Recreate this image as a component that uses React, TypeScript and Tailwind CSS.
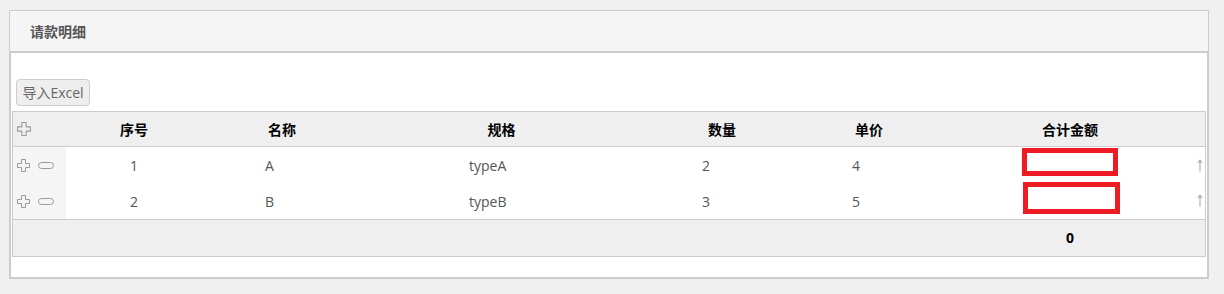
import React from "react";

type Row = { no: number; name: string; spec: string; qty: number; price: number };

const rows: Row[] = [
  { no: 1, name: "A", spec: "typeA", qty: 2, price: 4 },
  { no: 2, name: "B", spec: "typeB", qty: 3, price: 5 },
];

const cols = "grid grid-cols-[53px_136px_160px_279px_162px_132px_1fr]";

const PlusIcon = ({ size = 13 }: { size?: number }) => (
  <svg width={size} height={size} viewBox="0 0 13 13" fill="none">
    <path
      d="M4.5 0.5h4v4h4v4h-4v4h-4v-4h-4v-4h4z"
      stroke="#9a9a9a"
      strokeWidth="1"
      strokeLinejoin="round"
    />
  </svg>
);

const MinusIcon = () => (
  <svg width="16" height="7" viewBox="0 0 16 7" fill="none">
    <rect x="0.5" y="0.5" width="15" height="6" rx="3" stroke="#9a9a9a" strokeWidth="1" />
  </svg>
);

// 排序箭头
const UpArrow = () => (
  <svg width="6" height="13" viewBox="0 0 6 13" fill="none">
    <path d="M3 1.5V12.5M0.8 4L3 1.2L5.2 4" stroke="#a4adb8" strokeWidth="1.1" />
  </svg>
);

const App = () => {
  return (
    <div className="min-h-[294px] w-[1224px] bg-[#f0f0f0] pt-[10px] pl-[9px] font-['Open_Sans','Noto_Sans_CJK_SC',sans-serif]">
      <div className="w-[1200px] border border-[#cccccc] bg-white">
        {/* 面板标题 */}
        <div className="flex h-[41px] items-center border-b border-[#cccccc] bg-[#f5f5f5] pl-[20px]">
          <span className="text-[14px] font-bold text-[#555555] font-['Noto_Sans_CJK_SC',sans-serif]">请款明细</span>
        </div>

        <div className="border border-[#cccccc] bg-white pb-[20px]">
          <div className="pt-[26px] pl-[5px]">
            <button className="flex h-[27px] w-[74px] items-center justify-center rounded-[4px] border border-[#cccccc] bg-[#eeeeee] text-[14px] text-[#666666]">
              导入Excel
            </button>
          </div>

          <div className="mx-[1px] mt-[5px] border border-[#cccccc] text-[14px]">
            {/* 表头 */}
            <div className={`${cols} h-[35px] items-center border-b border-[#cccccc] bg-[#efefef] font-bold text-black font-['Noto_Sans_CJK_SC',sans-serif]`}>
              <div className="flex items-center pl-[4px]">
                <PlusIcon size={14} />
              </div>
              <div className="text-center">序号</div>
              <div className="text-center">名称</div>
              <div className="text-center">规格</div>
              <div className="text-center">数量</div>
              <div className="text-center">单价</div>
              <div className="text-center">合计金额</div>
            </div>

            {/* 明细行 */}
            <div className="border-b border-[#cccccc]">
              {rows.map((r, i) => (
                <div key={r.no} className={`${cols} h-[36px] items-center text-[#555555]`}>
                  <div className="flex h-full items-center gap-[8px] bg-[#f5f5f5] pl-[4px]">
                    <PlusIcon />
                    <MinusIcon />
                  </div>
                  <div className="text-center">{r.no}</div>
                  <div className="pl-[63px]">{r.name}</div>
                  <div className="pl-[107px]">{r.spec}</div>
                  <div className="pl-[61px]">{r.qty}</div>
                  <div className="pl-[49px]">{r.price}</div>
                  <div className="flex h-full items-start">
                    {i === 0 ? (
                      <div className="mt-[1px] ml-[87px] h-[28px] w-[96px] border-[5px] border-[#ed1c24] bg-white" />
                    ) : (
                      <div className="-mt-[1px] ml-[88px] h-[32px] w-[97px] border-[5px] border-[#ed1c24] bg-white" />
                    )}
                    <span className={`${i === 0 ? "mt-[12px]" : "mt-[11px]"} mr-[2px] ml-auto flex`}>
                      <UpArrow />
                    </span>
                  </div>
                </div>
              ))}
            </div>

            {/* 合计 */}
            <div className={`${cols} h-[36px] items-center bg-[#efefef] pb-[2px] font-bold text-black`}>
              <div />
              <div />
              <div />
              <div />
              <div />
              <div />
              <div className="text-center">0</div>
            </div>
          </div>
        </div>
      </div>
    </div>
  );
};

export default App;
